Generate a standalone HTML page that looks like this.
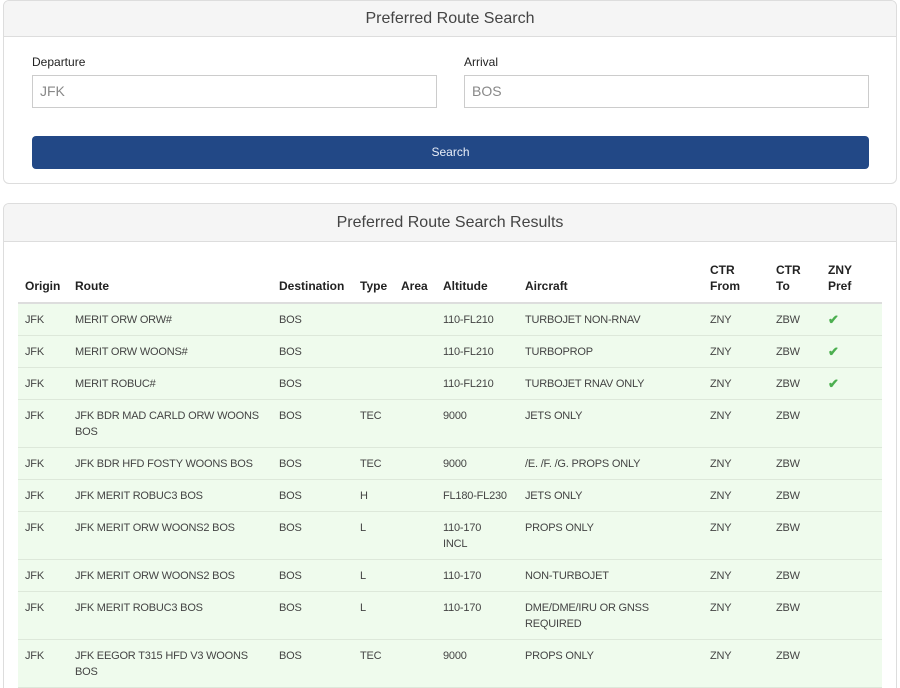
<!DOCTYPE html>
<html style="height:688px;overflow:hidden"><head><meta charset="utf-8"><style>
*{box-sizing:border-box;margin:0;padding:0}
body{width:900px;height:688px;overflow:hidden;background:#fff;font-family:"Liberation Sans",sans-serif;color:#333;position:relative}
.card{position:absolute;left:3px;width:894px;border:1px solid #ddd;border-radius:6px;background:#fff;overflow:hidden}
.hd{height:36px;background:#f5f5f5;border-bottom:1px solid #ddd;text-align:center;font-size:16px;line-height:36px;color:#444}
.lbl{position:absolute;font-size:12px;color:#222}
.inp{position:absolute;height:33px;border:1px solid #ccc;font-size:14px;color:#888;padding-left:7px;line-height:31px}
.btn{position:absolute;left:28px;top:135px;width:837px;height:33px;background:#224886;border-radius:4px;color:#e8eef8;font-size:12px;text-align:center;line-height:33px}
table{position:absolute;left:14px;top:37px;width:864px;border-collapse:collapse;table-layout:fixed;font-size:11px}
th{text-align:left;font-weight:bold;vertical-align:bottom;padding:0 7px 8px;line-height:16px;color:#222;height:62px;border-bottom:2px solid #ddd;font-size:12px;white-space:nowrap}
td{vertical-align:top;padding:8px 7px 7px;line-height:16px;color:#444;background:#effbed;border-bottom:1px solid #dde8da;white-space:nowrap;letter-spacing:-0.2px}
.ck{color:#4caf50;font-weight:bold;font-size:13px}
</style></head><body>
<div class="card" style="top:0;height:184px">
<div class="hd">Preferred Route Search</div>
<div class="lbl" style="left:28px;top:54px">Departure</div>
<div class="lbl" style="left:460px;top:54px">Arrival</div>
<div class="inp" style="left:28px;top:74px;width:405px">JFK</div>
<div class="inp" style="left:460px;top:74px;width:405px">BOS</div>
<div class="btn">Search</div>
</div>
<div class="card" style="top:203px;height:495px">
<div class="hd" style="height:38px;line-height:38px">Preferred Route Search Results</div>
<table>
<colgroup><col style="width:50px"><col style="width:204px"><col style="width:81px"><col style="width:41px"><col style="width:42px"><col style="width:82px"><col style="width:185px"><col style="width:66px"><col style="width:52px"><col style="width:61px"></colgroup>
<tr><th>Origin</th><th>Route</th><th>Destination</th><th>Type</th><th>Area</th><th>Altitude</th><th>Aircraft</th><th>CTR<br>From</th><th>CTR<br>To</th><th>ZNY<br>Pref</th></tr>
<tr><td>JFK</td><td>MERIT ORW ORW#</td><td>BOS</td><td></td><td></td><td>110-FL210</td><td>TURBOJET NON-RNAV</td><td>ZNY</td><td>ZBW</td><td class="ck">✔</td></tr>
<tr><td>JFK</td><td>MERIT ORW WOONS#</td><td>BOS</td><td></td><td></td><td>110-FL210</td><td>TURBOPROP</td><td>ZNY</td><td>ZBW</td><td class="ck">✔</td></tr>
<tr><td>JFK</td><td>MERIT ROBUC#</td><td>BOS</td><td></td><td></td><td>110-FL210</td><td>TURBOJET RNAV ONLY</td><td>ZNY</td><td>ZBW</td><td class="ck">✔</td></tr>
<tr><td>JFK</td><td>JFK BDR MAD CARLD ORW WOONS<br>BOS</td><td>BOS</td><td>TEC</td><td></td><td>9000</td><td>JETS ONLY</td><td>ZNY</td><td>ZBW</td><td></td></tr>
<tr><td>JFK</td><td>JFK BDR HFD FOSTY WOONS BOS</td><td>BOS</td><td>TEC</td><td></td><td>9000</td><td>/E. /F. /G. PROPS ONLY</td><td>ZNY</td><td>ZBW</td><td></td></tr>
<tr><td>JFK</td><td>JFK MERIT ROBUC3 BOS</td><td>BOS</td><td>H</td><td></td><td>FL180-FL230</td><td>JETS ONLY</td><td>ZNY</td><td>ZBW</td><td></td></tr>
<tr><td>JFK</td><td>JFK MERIT ORW WOONS2 BOS</td><td>BOS</td><td>L</td><td></td><td>110-170<br>INCL</td><td>PROPS ONLY</td><td>ZNY</td><td>ZBW</td><td></td></tr>
<tr><td>JFK</td><td>JFK MERIT ORW WOONS2 BOS</td><td>BOS</td><td>L</td><td></td><td>110-170</td><td>NON-TURBOJET</td><td>ZNY</td><td>ZBW</td><td></td></tr>
<tr><td>JFK</td><td>JFK MERIT ROBUC3 BOS</td><td>BOS</td><td>L</td><td></td><td>110-170</td><td>DME/DME/IRU OR GNSS<br>REQUIRED</td><td>ZNY</td><td>ZBW</td><td></td></tr>
<tr><td>JFK</td><td>JFK EEGOR T315 HFD V3 WOONS<br>BOS</td><td>BOS</td><td>TEC</td><td></td><td>9000</td><td>PROPS ONLY</td><td>ZNY</td><td>ZBW</td><td></td></tr>
</table>
</div>
</body></html>
